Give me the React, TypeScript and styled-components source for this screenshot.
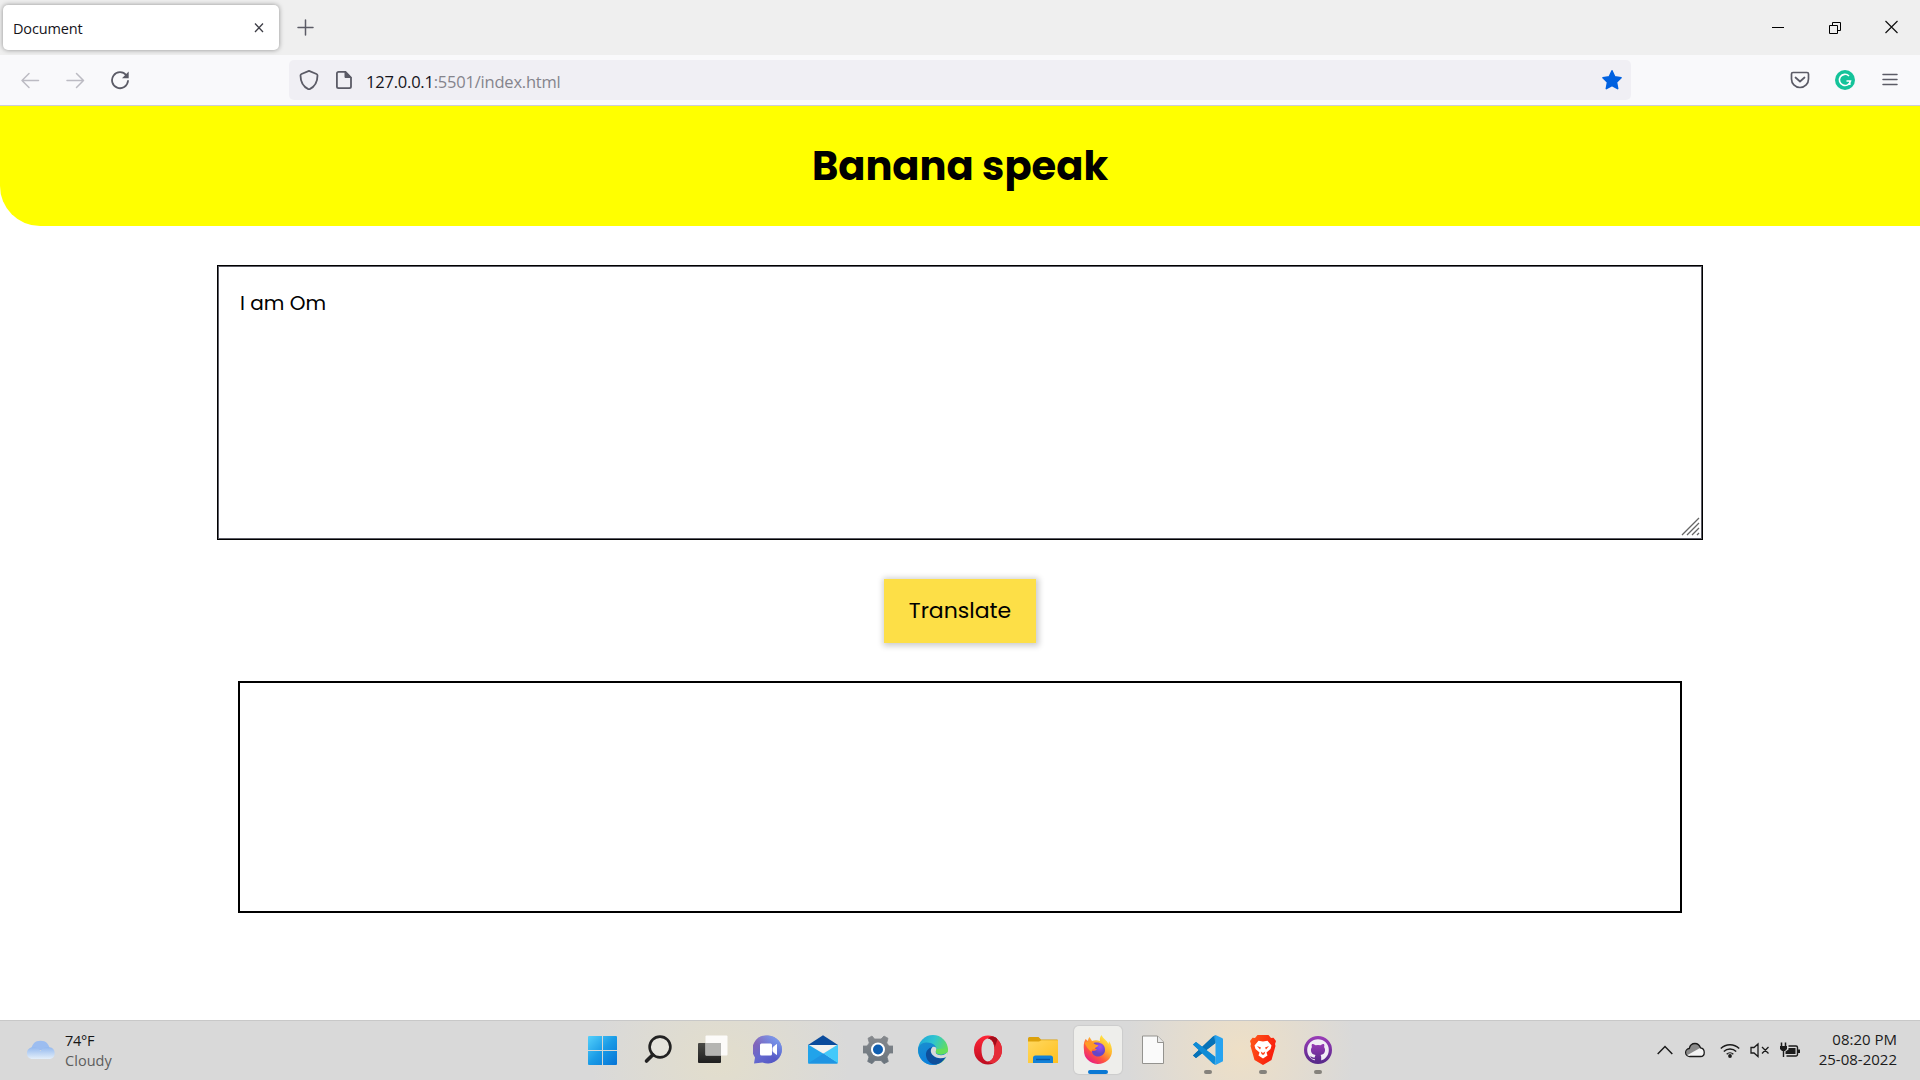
import React from "react";
import styled, { createGlobalStyle } from "styled-components";

const Global = createGlobalStyle`
  *, *::before, *::after { box-sizing: border-box; }
  html, body { margin: 0; padding: 0; background: #fff; overflow: hidden; }
  svg { display: block; flex: none; }
`;

const poppins = `Poppins, Inter, "Open Sans", sans-serif`;
const ui = `"Open Sans", "Noto Sans", sans-serif`;

const Screen = styled.div`
  width: 1920px;
  height: 1080px;
  display: flex;
  flex-direction: column;
  background: #fff;
  font-family: ${ui};
`;

/* Browser chrome */
const TabBar = styled.div`
  height: 55px;
  flex: none;
  background: #efefef;
  display: flex;
  align-items: center;
  padding: 0 21px 0 3px;
`;
const Tab = styled.div`
  width: 276px;
  height: 45px;
  background: #fff;
  border-radius: 5px;
  box-shadow: 0 0 5px rgba(0, 0, 0, 0.4);
  display: flex;
  align-items: center;
  justify-content: space-between;
  padding: 0 14px 0 10px;
`;
const TabTitle = styled.span`
  font-size: 14.5px;
  line-height: 20px;
  letter-spacing: -0.15px;
  color: #15141a;
  padding-top: 2px;
`;
const NewTab = styled.div`
  margin-left: 18px;
`;
const WindowButtons = styled.div`
  margin-left: auto;
  display: flex;
  align-items: center;
  gap: 42px;
`;
const Toolbar = styled.div`
  height: 51px;
  flex: none;
  background: #f9f9fb;
  border-bottom: 1px solid #ccccd6;
  display: flex;
  align-items: center;
  padding: 0 22px 0 20px;
`;
const NavButtons = styled.div`
  width: 269px;
  display: flex;
  align-items: center;
  gap: 25px;
`;
const AddressBar = styled.div`
  width: 1342px;
  height: 40px;
  background: #f0eff4;
  border-radius: 5px;
  display: flex;
  align-items: center;
  padding: 0 8px 0 10px;
`;
const AddressIcons = styled.div`
  display: flex;
  gap: 15px;
  margin-right: 12px;
`;
const Address = styled.span`
  font-size: 16.5px;
  line-height: 24px;
  letter-spacing: -0.21px;
  color: #85848c;
  padding-top: 3px;
`;
const Host = styled.span`
  color: #15141a;
`;
const Star = styled.div`
  margin-left: auto;
`;
const Extensions = styled.div`
  margin-left: auto;
  display: grid;
  grid-template-columns: 20px 20px 16px;
  align-items: center;
  column-gap: 26px;

  & > :nth-child(1) { margin-right: 0; }
  & > :nth-child(2) { margin-left: -1px; }
`;

/* Page */
const Page = styled.main`
  flex: 1;
  display: flex;
  flex-direction: column;
  align-items: center;
  font-family: ${poppins};
`;
const Banner = styled.header`
  width: 100%;
  height: 120px;
  background: #ff0;
  border-bottom-left-radius: 40px;
  display: flex;
  align-items: center;
  justify-content: center;
`;
const Title = styled.h1`
  margin: 0;
  font-size: 40px;
  line-height: 60px;
  font-weight: 700;
  color: #000;
`;
const Input = styled.div`
  width: 1486px;
  height: 275px;
  margin-top: 39px;
  border: 1px solid #000;
  box-shadow: inset 0 0 0 1px #5c5c66;
  padding: 22px 2px 3px 22px;
  display: flex;
  justify-content: space-between;
`;
const InputText = styled.span`
  font-size: 20px;
  line-height: 30px;
  color: #000;
`;
const Grip = styled.svg`
  align-self: flex-end;
`;
const Translate = styled.button`
  width: 152px;
  height: 64px;
  margin: 39px 0 38px;
  padding: 0;
  border: 0;
  background: #fddf47;
  box-shadow: 1px 1px 6px 2px rgba(0, 0, 0, 0.2);
  font-family: inherit;
  font-size: 22px;
  line-height: 34px;
  color: #000;
`;
const Output = styled.div`
  width: 1444px;
  height: 232px;
  border: 2px solid #000;
`;

/* Taskbar */
const Taskbar = styled.footer`
  height: 60px;
  flex: none;
  border-top: 1px solid #c8c8c8;
  background:
    radial-gradient(ellipse 130px 110px at 720px 40px, rgba(233, 225, 195, 0.6), transparent),
    radial-gradient(ellipse 115px 120px at 1240px 30px, rgba(247, 226, 190, 0.7), transparent),
    #d9d9d9;
  display: grid;
  grid-template-columns: 575px 770px 575px;
`;
const Weather = styled.div`
  display: flex;
  align-items: center;
  gap: 9px;
  padding: 0 0 2px 25px;
`;
const WeatherText = styled.div`
  display: flex;
  flex-direction: column;
  font-size: 14.5px;
  line-height: 20px;
  letter-spacing: 0.05px;
  color: #5d5d5d;
  padding-top: 3px;
`;
const Temp = styled.span`
  color: #161616;
  letter-spacing: -0.3px;
`;
const Apps = styled.div`
  display: flex;
`;
const AppSlot = styled.div`
  width: 55px;
  display: flex;
  justify-content: center;
  align-items: center;
  padding-bottom: 1px;
`;
const AppTile = styled.div<{ $active?: boolean }>`
  width: 48px;
  height: 48px;
  border-radius: 5px;
  background: ${(p) => (p.$active ? "#eeeeeb" : "transparent")};
  box-shadow: ${(p) => (p.$active ? "0 0 1px 1px rgba(0,0,0,0.06)" : "none")};
  display: flex;
  flex-direction: column;
  align-items: center;
  padding-top: 9px;
`;
const Running = styled.div<{ $active?: boolean }>`
  margin-top: 5px;
  width: ${(p) => (p.$active ? 20 : 8)}px;
  height: 4px;
  flex: none;
  border-radius: 2px;
  background: ${(p) => (p.$active ? "#0a78d4" : "#85827c")};
`;
const Tray = styled.div`
  display: flex;
  align-items: center;
  justify-content: flex-end;
  padding: 0 23px 2px 0;
`;
const TrayIcons = styled.div`
  display: flex;
  align-items: center;
  margin-right: 19px;
`;
const TrayIcon = styled.div<{ $gap: number }>`
  margin-right: ${(p) => p.$gap}px;
`;
const Clock = styled.div`
  font-size: 15px;
  line-height: 20px;
  text-align: right;
  letter-spacing: 0;
  color: #1b1b1b;
  padding-bottom: 2px;
`;

const Ico = ({ children, w = 20, h = w, vb }: { children: React.ReactNode; w?: number; h?: number; vb?: string }) => (
  <svg width={w} height={h} viewBox={vb ?? `0 0 ${w} ${h}`} fill="none">{children}</svg>
);

const StartIcon = () => (
  <Ico w={30}>
    <defs><linearGradient id="win" x1="0" y1="0" x2="1" y2="1"><stop stopColor="#54d0fb" /><stop offset="0.5" stopColor="#1a9be6" /><stop offset="1" stopColor="#0573d6" /></linearGradient></defs>
    <path d="M0 2a1 1 0 0 1 1-1H14v14H0zM15 1H28a1 1 0 0 1 1 1V15H15zM0 16H14v14H1a1 1 0 0 1-1-1zM15 16h14v13a1 1 0 0 1-1 1h-13z" fill="url(#win)" />
    <path d="M14.500 1v29M0 15.500h29" stroke="#d8d8d4" />
  </Ico>
);
const SearchIcon = () => (
  <Ico w={30}>
    <circle cx="17" cy="12" r="10.400" stroke="#222" strokeWidth="2.600" fill="#fff" fillOpacity="0.25" />
    <path d="M9.800 19.700 3.500 26" stroke="#222" strokeWidth="3.600" strokeLinecap="round" />
  </Ico>
);
const TaskViewIcon = () => (
  <Ico w={30}>
    <defs><linearGradient id="tv" x1="0" y1="0" x2="0" y2="1"><stop stopColor="#4a4a46" /><stop offset="1" stopColor="#1f1f1f" /></linearGradient></defs>
    <rect y="8" width="23" height="20" rx="1" fill="url(#tv)" />
    <rect x="7.500" y="0.500" width="22" height="20" rx="1" fill="#fff" fillOpacity="0.880" />
    <path d="M7.500 8H23v12.500H7.500z" fill="#b5b5b2" />
  </Ico>
);
const ChatIcon = () => (
  <Ico w={30}>
    <defs><linearGradient id="ch" x1="0" y1="0" x2="1" y2="1"><stop stopColor="#9562ac" /><stop offset="0.5" stopColor="#6569cf" /><stop offset="1" stopColor="#4c4fc0" /></linearGradient><linearGradient id="ch2" x1="1" y1="0" x2="0.5" y2="0.6"><stop stopColor="#7fa8f5" /><stop offset="1" stopColor="#7fa8f5" stopOpacity="0" /></linearGradient></defs>
    <path d="M15 .5a14.200 14 0 1 1-5.500 27L1 28.500l1-6A14 14 0 0 1 15 .5z" fill="url(#ch)" />
    <path d="M15 .5a14.200 14 0 1 1-5.500 27L1 28.500l1-6A14 14 0 0 1 15 .5z" fill="url(#ch2)" />
    <rect x="7" y="8.500" width="12" height="12" rx="1.500" fill="#fff" />
    <path d="m20 12.500 3.500-3v10L20 16.500z" fill="#fff" stroke="#fff" strokeLinejoin="round" />
  </Ico>
);
const MailIcon = () => (
  <Ico w={30}>
    <path d="M0 10 15 .3 30 10z" fill="#0a4b9c" />
    <path d="M1 10h28L15 19z" fill="#eeeeec" />
    <path d="M0 9.500v18a1 1 0 0 0 1 1h28a1 1 0 0 0 1-1z" fill="#21a3ea" />
    <path d="M3 10h25L15.500 18z" fill="#f2f2f0" />
    <path d="M30 9.500 15.500 18.500 30 28z" fill="#43c9fa" />
    <path d="M0 28.500h29.500L15.500 18.500z" fill="#1f94e2" />
  </Ico>
);
const SettingsIcon = () => (
  <Ico w={30}>
    <defs><linearGradient id="gear" x1="0" y1="0" x2="0" y2="1"><stop stopColor="#86898d" /><stop offset="1" stopColor="#6a747d" /></linearGradient></defs>
    <path d="m11.500 4-2.500-3-4 2.300L6.300 8 4 11H0v7h3.500l2.500 4-1.300 4.500 4.300 2.200 3-3.200h6l3 3.200 4.300-2.200L24 22l2.500-4H30v-7h-4l-2.300-3 1.300-4.700-4-2.300-3 3z" fill="url(#gear)" stroke="url(#gear)" strokeWidth="0.800" strokeLinejoin="round" />
    <circle cx="15" cy="14.500" r="7" fill="#fff" /><circle cx="15" cy="14.500" r="5" fill="#0f5eb0" />
  </Ico>
);
const EdgeIcon = () => (
  <Ico w={30}>
    <defs>
      <linearGradient id="e1" x1="0" y1="0" x2="1" y2="0.5"><stop stopColor="#1ba1dc" /><stop offset="0.5" stopColor="#30c5cf" /><stop offset="1" stopColor="#68e04d" /></linearGradient>
      <linearGradient id="e2" x1="0" y1="0" x2="0.6" y2="1"><stop stopColor="#1b8fce" /><stop offset="1" stopColor="#087bdf" /></linearGradient>
    </defs>
    <circle cx="15" cy="15" r="15" fill="url(#e1)" />
    <path d="M0 14C1 8.500 6 7.500 9 7.500c5.500 0 9.500 3 9.500 7 0 3 1 5 4.500 5 2.500 0 4.500-.7 6-2.200L28 22c-3 5-8 8-13 8C6 30 0 23 0 14z" fill="url(#e2)" />
    <path d="M14.500 12c-4 1-7 4-6.500 8.500.5 5 5 9.500 10 9 4-1 7.500-3.500 9.500-7.500-5 2-10 1.500-13-2-2.500-3-2-6 0-8z" fill="#0e4f9b" />
    <path d="M14.500 12c2.500-1 4 .5 4 2.500-.3 1.500-.7 2-.7 3 .2 1.800 2.800 2.800 5.200 2.800 3 0 5-1.500 6.500-3.500l.5 4-2 1.500c-5 2-10 1-13-2s-2.500-6-.5-8.300z" fill="#d9d9d9" />
    <path d="M18.500 14c-.5 1.500-.8 2-.7 3 .2 1.800 2.400 2.500 5.200 2.500 3.500 0 7-2.500 7-6z" fill="#63df5b" />
  </Ico>
);
const OperaIcon = () => (
  <Ico w={30}>
    <defs><linearGradient id="op" x1="0" y1="0" x2="0" y2="1"><stop stopColor="#ff2638" /><stop offset="1" stopColor="#bd0c20" /></linearGradient></defs>
    <path fillRule="evenodd" d="M15 .5a14 14.500 0 1 0 0 29 14 14.500 0 0 0 0-29zM15 3.500c4 0 6.500 5 6.500 11.500S19 26.500 15 26.500 8.500 21.500 8.500 15 11 3.500 15 3.500z" fill="url(#op)" />
    <path d="M15 3.500c3-2.700 7-2.700 9.500 1 6 5 6 16 0 21-2.500 3-6 3.500-9.500 1 4 0 6.500-5 6.500-11.500S19 3.500 15 3.500z" fill="#e52c38" />
    <path d="M15 3.500c3-2.700 7-2.700 9.500 1L21.800 12C21 7 18.500 3.500 15 3.500z" fill="#a30d1b" />
  </Ico>
);
const FolderIcon = () => (
  <Ico w={30}>
    <defs><linearGradient id="fo" x1="0" y1="0" x2="1" y2="1"><stop stopColor="#ffd860" /><stop offset="1" stopColor="#ffc01e" /></linearGradient></defs>
    <path d="M0 3.500a1.500 1.500 0 0 1 1.500-1.500h9L13 4.500h16a1 1 0 0 1 1 1v5H0z" fill="#dca10b" />
    <path d="M0 6.500h11L13.500 5.300H30V28H0z" fill="url(#fo)" />
    <path d="M5 28v-5a2.500 2.500 0 0 1 2.500-2.500h15A2.500 2.500 0 0 1 25 23v5z" fill="#1281d8" /><path d="M8 24.500h14" stroke="#0756a4" strokeWidth="1.400" />
  </Ico>
);
const FirefoxIcon = () => (
  <Ico w={30}>
    <defs>
      <linearGradient id="f1" x1="0.9" y1="0.1" x2="0.2" y2="1"><stop stopColor="#fff14a" /><stop offset="0.35" stopColor="#ffb32d" /><stop offset="0.65" stopColor="#ff5540" /><stop offset="1" stopColor="#e5148d" /></linearGradient>
      <radialGradient id="f2" cx="0.6" cy="0.3"><stop stopColor="#a14df4" /><stop offset="1" stopColor="#6546c8" /></radialGradient>
    </defs>
    <path d="M18.500 0c-1.500 2-2 4-1.500 6-2.500-1-5.500-1-8 0L6.500 2C5.500 3 5 5 5 6L2.500 4C.5 8 .5 11 1 15.500a14 13 0 0 0 28 1c0-4-1-7-3-10.500l-.5 3C24 5 20 4 18.500 0z" fill="url(#f1)" />
    <path d="M9 8.500c4-2 13-2 13 6.500 0 4-3.500 6.500-7 6.500s-6-2.500-6-5.500c2 0 3.500 0 5-1.500-2.500-.5-4-3-5-6z" fill="url(#f2)" />
    <path d="M1.500 8C4 6 9 6 11 8.500c1 1.500 3.500 1 4.500 2-1 1.500-3.500 2-4 3.500-2 0-3 1-3 3-3-2-5-5-7-9z" fill="#ff9a25" />
  </Ico>
);
const FileIcon = () => (
  <Ico w={30}>
    <path d="M4.500 1h15l6 6v21.500h-21z" fill="#fafafa" stroke="#94938f" /><path d="M19.500 1v6.500h6" fill="#e8e8e8" stroke="#94938f" />
  </Ico>
);
const CodeIcon = () => (
  <Ico w={30}>
    <path d="M0 9.500 3 7l19 15v7.500l-2-1z" fill="#087fca" /><path d="M0 20.500 3 23l19.500-15V.5l-2 .7z" fill="#0668aa" />
    <path d="M0 20.500 20.500 1 22.500 8 3 23z" fill="#0672b8" /><path d="M0 9.500 3 7l19.500 15-2 7z" fill="#0f8bd6" />
    <path d="M22.500 0 29 3a1.500 1.500 0 0 1 1 1.400v21a1.500 1.500 0 0 1-1 1.400L22.500 30z" fill="#27a3f0" />
    <path d="m22.500 0-2 1.300L22.500 8v14l-2 6.700 2 1.300z" fill="#1591de" />
  </Ico>
);
const BraveIcon = () => (
  <Ico w={30}>
    <defs><linearGradient id="br" x1="0" y1="0" x2="1" y2="0.4"><stop stopColor="#ff5a1a" /><stop offset="1" stopColor="#f91d0c" /></linearGradient></defs>
    <path d="M9.500 0h11l2.500 3 2.500-.3L28 6l-1 3 .5 2-4 14L15 30l-8.500-5-4-14L3 9 2 6l2.500-3.300L7 3z" fill="url(#br)" />
    <path d="m15 6.500 4.500-.8 4 4.800-1 3.500-4 3.500 1 3L15 23.500 10.500 20.500l1-3-4-3.500-1-3.500 4-4.800z" fill="#fff" />
    <path d="m9 11 4 1.500-1 2zM21 11l-4 1.500 1 2zM12.800 16.500l2.200 1.500 2.200-1.500-.7 2.500-1.500 1-1.500-1z" fill="#ff421b" />
  </Ico>
);
const GithubIcon = () => (
  <Ico w={30}>
    <defs><linearGradient id="gh" x1="0" y1="0" x2="0" y2="1"><stop stopColor="#973bb5" /><stop offset="1" stopColor="#59298b" /></linearGradient></defs>
    <circle cx="15" cy="15" r="12.400" fill="#f1edf5" stroke="url(#gh)" strokeWidth="3.200" />
    <path d="M9 9c1-.3 2.500.4 3.500 1.200a12 12 0 0 1 5 0C18.500 9.400 20 8.700 21 9c.5 1.200.4 2.300 0 3 2 2.500 1.300 7.500-3.500 8 .6.800.7 1.500.7 2.500v4h-6.400V24c-3 .6-3.500-1.500-5-2.500 2.500-.5 2.500 1.500 5 1 0-1 .2-1.800.7-2.500C7.700 19.500 7 14.500 9 12c-.4-.7-.5-1.800 0-3z" fill="url(#gh)" />
  </Ico>
);

const apps: { name: string; Icon: React.FC; running?: boolean; active?: boolean }[] = [
  { name: "start", Icon: StartIcon },
  { name: "search", Icon: SearchIcon },
  { name: "tasks", Icon: TaskViewIcon },
  { name: "chat", Icon: ChatIcon },
  { name: "mail", Icon: MailIcon },
  { name: "settings", Icon: SettingsIcon },
  { name: "edge", Icon: EdgeIcon },
  { name: "opera", Icon: OperaIcon },
  { name: "files", Icon: FolderIcon },
  { name: "firefox", Icon: FirefoxIcon, running: true, active: true },
  { name: "file", Icon: FileIcon },
  { name: "code", Icon: CodeIcon, running: true },
  { name: "brave", Icon: BraveIcon, running: true },
  { name: "github", Icon: GithubIcon, running: true },
];

const gray = "#5b5b66";

export default function App() {
  return (
    <Screen>
      <Global />
      <TabBar>
        <Tab>
          <TabTitle>Document</TabTitle>
          <Ico w={12}><path d="m2 1.500 8 8.500m0-8.500L2 10" stroke="#3f3f47" strokeWidth="1.300" /></Ico>
        </Tab>
        <NewTab><Ico w={17}><path d="M8.500 1v15M1 8.500h15" stroke={gray} strokeWidth="1.500" strokeLinecap="round" /></Ico></NewTab>
        <WindowButtons>
          <Ico w={14}><path d="M0 6.500h12" stroke="#000" /></Ico>
          <Ico w={14}><path d="M1.500 4.500h8v8h-8zM4.500 4.500v-3h8v8h-3" stroke="#000" /></Ico>
          <Ico w={15}><path d="m1.500 1 12 12m0-12-12 12" stroke="#111" strokeWidth="1.200" /></Ico>
        </WindowButtons>
      </TabBar>
      <Toolbar>
        <NavButtons>
          <Ico><path d="M18.500 10.500H2M9 3.500l-7 7 7 7" stroke="#bcbbc3" strokeWidth="1.500" strokeLinecap="round" strokeLinejoin="round" /></Ico>
          <Ico><path d="M2 10.500H18.500M11.500 3.500l7 7-7 7" stroke="#bcbbc3" strokeWidth="1.500" strokeLinecap="round" strokeLinejoin="round" /></Ico>
          <Ico><path d="M16.300 5.200A8 8 0 1 0 18 11" stroke={gray} strokeWidth="1.800" strokeLinecap="round" /><path d="M18.700 1.500v6.700H12z" fill={gray} /></Ico>
        </NavButtons>
        <AddressBar>
          <AddressIcons>
            <Ico><path d="M10 .9 17.500 4c.8.400 1 .8 1 1.500 0 6-2 11-8.500 14C3.500 16.500 1.500 11.500 1.500 5.500c0-.7.2-1.100 1-1.500z" stroke={gray} strokeWidth="1.800" strokeLinejoin="round" /></Ico>
            <Ico><path d="M4.500 1.900h7L17 7.500v9a1.600 1.600 0 0 1-1.600 1.600H4.500A1.600 1.600 0 0 1 2.900 16.500v-13a1.600 1.600 0 0 1 1.600-1.600z" stroke={gray} strokeWidth="1.800" /><path d="M11 1.500v6h6z" fill={gray} stroke={gray} strokeLinejoin="round" /></Ico>
          </AddressIcons>
          <Address><Host>127.0.0.1</Host>:5501/index.html</Address>
          <Star><Ico w={22}><path d="m11 1.800 2.800 6 6.300.9-4.600 4.500 1.200 6.500L11 16.500l-5.700 3.200 1.200-6.500-4.600-4.500 6.300-.9z" fill="#0061e0" stroke="#0061e0" strokeWidth="1.500" strokeLinejoin="round" /></Ico></Star>
        </AddressBar>
        <Extensions>
          <Ico><path d="M3 2.500h14c1 0 1.500.5 1.500 1.500v5c0 4.500-3.500 8.500-8.500 8.500S1.500 13.500 1.500 9V4c0-1 .5-1.500 1.500-1.500zM5.500 7.500 10 11.500l4.500-4" stroke={gray} strokeWidth="1.700" strokeLinecap="round" strokeLinejoin="round" /></Ico>
          <Ico><circle cx="10" cy="10" r="10" fill="#15c39a" /><path d="M14 6A5.600 5.600 0 1 0 15.500 11h-4M14.800 11v4" stroke="#fff" strokeWidth="1.600" /></Ico>
          <Ico w={16} h={20}><path d="M1 4.500h14M1 9.500h14M1 14.500h14" stroke={gray} strokeWidth="1.500" strokeLinecap="round" /></Ico>
        </Extensions>
      </Toolbar>
      <Page>
        <Banner><Title>Banana speak</Title></Banner>
        <Input>
          <InputText>I am Om</InputText>
          <Grip width="19" height="19" viewBox="0 0 19 19"><path d="M1 18 18 1M6 18 18 6M11 18l7-7M16 18l2-2" stroke="#666" strokeWidth="1.300" /></Grip>
        </Input>
        <Translate>Translate</Translate>
        <Output />
      </Page>
      <Taskbar>
        <Weather>
          <Ico w={31} h={20}>
            <defs><linearGradient id="cl" x1="0" y1="0" x2="0" y2="1"><stop stopColor="#93b8ee" /><stop offset="1" stopColor="#e4effa" /></linearGradient></defs>
            <path d="M6 10C7 4 10 .8 15.500.8S24 4 25 10z" fill="#9cbdf0" />
            <path d="M6.500 19a6 6 0 0 1-.5-11.500C10.500 6.500 13.500 8 15.500 11c2-3 5-4.500 9-3.800A6 6 0 0 1 25 19z" fill="url(#cl)" />
          </Ico>
          <WeatherText><Temp>74°F</Temp><span>Cloudy</span></WeatherText>
        </Weather>
        <Apps>
          {apps.map(({ name, Icon, running, active }) => (
            <AppSlot key={name}>
              <AppTile $active={active}>
                <Icon />
                {running && <Running $active={active} />}
              </AppTile>
            </AppSlot>
          ))}
        </Apps>
        <Tray>
          <TrayIcons>
            <TrayIcon $gap={12}><Ico w={16} h={10}><path d="m.7 9 7.300-7.500L15.300 9" stroke="#1b1b1b" strokeWidth="1.500" /></Ico></TrayIcon>
            <TrayIcon $gap={15}><Ico w={20} h={16}><path d="M5 14.500a4 4 0 0 1-.7-8C5 3 7.500 1.500 10 1.500c3 0 4.500 1.500 5.500 4.300 5 .7 5 8.700 0 8.700z" fill="#f3f3f3" /><path d="M4.300 6.500C5 3 7.500 1.500 10 1.500c3 0 4.500 1.500 5.500 4.300L2.500 13C0 11 1 7 4.300 6.500z" fill="#8b8b8b" /><path d="M5 14.500a4 4 0 0 1-.7-8C5 3 7.500 1.500 10 1.500c3 0 4.500 1.500 5.500 4.300 5 .7 5 8.700 0 8.700z" stroke="#1b1b1b" strokeWidth="1.300" /></Ico></TrayIcon>
            <TrayIcon $gap={10}><Ico w={20} h={16}><path d="M.8 6.500a13 13 0 0 1 18.400 0M3.800 9.500a8.800 8.800 0 0 1 12.400 0M6.700 12.200a4.700 4.700 0 0 1 6.600 0" stroke="#1b1b1b" strokeWidth="1.400" /><circle cx="10" cy="14" r="1.900" fill="#1b1b1b" /></Ico></TrayIcon>
            <TrayIcon $gap={10}><Ico w={20} h={16}><path d="M1 5.500h3L8 2v12.500L4 11H1zM12 5l6.500 6.500M18.500 5 12 11.500" stroke="#1b1b1b" strokeWidth="1.300" /></Ico></TrayIcon>
            <TrayIcon $gap={0}><Ico w={20} h={16}><path d="M1.500.5v4M5.500.5v4" stroke="#1b1b1b" strokeWidth="1.500" /><path d="M0 4h7v3L5 9H2L0 7z" fill="#1b1b1b" /><path d="M3.500 8v7M8.500 4H16a1.500 1.500 0 0 1 1.500 1.500v7A1.500 1.500 0 0 1 16 14H6.500" stroke="#1b1b1b" strokeWidth="1.400" /><path d="M8.500 6H15.500v6h-10V9.500l3-2zM18 7.500h2v3.500h-2z" fill="#1b1b1b" /></Ico></TrayIcon>
          </TrayIcons>
          <Clock>08:20 PM<br />25-08-2022</Clock>
        </Tray>
      </Taskbar>
    </Screen>
  );
}
